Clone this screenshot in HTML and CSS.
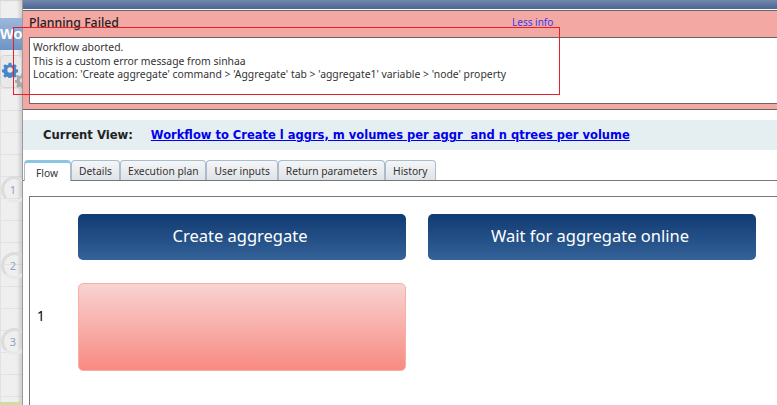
FILE: index.html
```html
<!DOCTYPE html>
<html lang="en">
<head>
    <meta charset="UTF-8">
    <title>Workflow</title>
    <link rel="stylesheet" href="styles.css">
</head>
<body>
    <div class="page">
        <aside class="rail">
            <div class="rail-title">Wo</div>
            <div class="rail-tools">
                <svg class="gear gear-blue" viewBox="0 0 24 24"><path d="M10 1h4l.6 3 2.200.9 2.600-1.700 2.800 2.800-1.700 2.600.9 2.200 3 .6v4l-3 .6-.9 2.200 1.700 2.600-2.800 2.800-2.600-1.700-2.200.9-.6 3h-4l-.6-3-2.200-.9-2.600 1.700-2.800-2.800 1.700-2.600-.9-2.200-3-.6v-4l3-.6.9-2.200-1.700-2.600 2.800-2.800 2.600 1.700 2.200-.9zM12 8a4 4 0 1 0 0 8 4 4 0 0 0 0-8z" fill-rule="evenodd"/></svg>
                <svg class="gear gear-grey" viewBox="0 0 24 24"><path d="M10 1h4l.6 3 2.200.9 2.600-1.700 2.800 2.800-1.700 2.600.9 2.200 3 .6v4l-3 .6-.9 2.200 1.700 2.600-2.800 2.800-2.600-1.700-2.200.9-.6 3h-4l-.6-3-2.200-.9-2.600 1.700-2.800-2.800 1.700-2.600-.9-2.200-3-.6v-4l3-.6.9-2.200-1.700-2.600 2.800-2.800 2.600 1.700 2.200-.9zM12 8a4 4 0 1 0 0 8 4 4 0 0 0 0-8z" fill-rule="evenodd"/></svg>
            </div>
            <div class="steps">
                <div class="step"><span>1</span></div>
                <div class="step"><span>2</span></div>
                <div class="step"><span>3</span></div>
            </div>
            <div class="rail-foot"></div>
        </aside>

        <main class="dialog">
            <div class="dialog-top"></div>

            <section class="error">
                <div class="error-head">
                    <h2>Planning Failed</h2>
                    <a class="less" href="#">Less info</a>
                </div>
                <div class="error-body">
                    <p>Workflow aborted.</p>
                    <p>This is a custom error message from sinhaa</p>
                    <p>Location: 'Create aggregate' command &gt; 'Aggregate' tab &gt; 'aggregate1' variable &gt; 'node' property</p>
                </div>
            </section>

            <div class="current">
                <strong>Current View:</strong>
                <a href="#">Workflow to Create l aggrs, m volumes per aggr&nbsp; and n qtrees per volume</a>
            </div>

            <ul class="tabs">
                <li class="tab active">Flow</li>
                <li class="tab">Details</li>
                <li class="tab">Execution plan</li>
                <li class="tab">User inputs</li>
                <li class="tab">Return parameters</li>
                <li class="tab">History</li>
            </ul>

            <div class="panel">
                <div class="flow">
                    <div></div>
                    <div class="cmd">Create aggregate</div>
                    <div class="cmd cmd-next">Wait for aggregate online</div>
                    <div class="row-num">1</div>
                    <div class="cell-failed"></div>
                </div>
            </div>
        </main>
    </div>

    <div class="highlight"></div>
</body>
</html>
```

FILE: styles.css
```css
html, body {
    margin: 0;
    padding: 0;
    height: 405px;
    overflow: hidden;
    background: #fff;
    font-family: "Noto Sans", "Open Sans", sans-serif;
}
.page {
    display: flex;
    height: 405px;
}

/* left rail behind the dialog */
.rail {
    position: relative;
    width: 23px;
    flex-shrink: 0;
    overflow: hidden;
    background-color: #efefef;
    background-image:
        linear-gradient(#e2e2e2 1px, transparent 1px),
        linear-gradient(90deg, #e2e2e2 1px, transparent 1px);
    background-size: 22px 22px;
    border-right: 1px solid #9a9a9a;
    box-sizing: border-box;
    box-shadow: inset -3px 0 3px rgba(0, 0, 0, 0.12);
}
.rail-title {
    margin-top: 18px;
    height: 32px;
    background: linear-gradient(#9db8dc, #6e93c4);
    color: #fff;
    font: bold 14.5px/33px "Liberation Sans", sans-serif;
    white-space: nowrap;
}
.rail-tools {
    position: relative;
    height: 33px;
    margin-top: 5px;
    background: #e9e9e9;
    border-radius: 4px;
    border: 1px solid #d4d4d4;
    box-sizing: border-box;
}
.gear {
    position: absolute;
}
.gear-blue {
    left: 1px;
    top: 6px;
    width: 16px;
    height: 16px;
    fill: #4a86c5;
}
.gear-grey {
    left: 14px;
    top: 17px;
    width: 15px;
    height: 15px;
    fill: #a9a9a9;
}
.steps {
    display: flex;
    flex-direction: column;
    gap: 49px;
    margin-top: 88px;
    padding-left: 1px;
}
.step {
    width: 27px;
    height: 27px;
    box-sizing: border-box;
    border: 3px solid #dcdcdc;
    border-right-color: transparent;
    border-bottom-color: #e8e8e8;
    border-radius: 50%;
    padding-right: 3px;
    text-align: center;
    font: 11px/21px "Noto Sans", sans-serif;
    color: #8ea2bd;
}
.rail-foot {
    position: absolute;
    left: 0;
    right: 0;
    bottom: 0;
    height: 3px;
    background: #cfdca6;
}

/* dialog */
.dialog {
    flex: 1;
    min-width: 0;
    display: flex;
    flex-direction: column;
}
.dialog-top {
    height: 9px;
    background: linear-gradient(#7288ab, #4a6595);
}
.error {
    height: 100px;
    margin-top: 1px;
    box-sizing: border-box;
    background: #f3a8a3;
    border-top: 1px solid #666;
    border-bottom: 1px solid #666;
    padding-left: 6px;
}
.error-head {
    display: flex;
    height: 26px;
}
.error-head h2 {
    margin: 0;
    width: 483px;
    font-size: 12.3px;
    font-weight: 500;
    line-height: 23px;
    color: #222;
}
.less {
    font-size: 10px;
    line-height: 23px;
    color: #3a3af0;
    text-decoration: none;
}
.error-body {
    height: 67px;
    box-sizing: border-box;
    background: #fff;
    border: 1px solid #666;
    border-right: 0;
    padding: 3px 3px;
    font-size: 10.4px;
    line-height: 13.5px;
    color: #333;
}
.error-body p {
    margin: 0;
}
.current {
    display: flex;
    align-items: center;
    height: 30px;
    margin-top: 10px;
    padding-left: 20px;
    gap: 18px;
    background: #e5eef0;
    font-family: "DejaVu Sans", sans-serif;
    font-size: 11.6px;
    font-weight: bold;
}
.current strong {
    color: #222;
}
.current a {
    color: #0000ee;
    font-size: 11.5px;
}
.tabs {
    display: flex;
    list-style: none;
    margin: 10px 0 0;
    padding: 0 0 0 1px;
    height: 21px;
    box-sizing: border-box;
    border-bottom: 1px solid #777;
}
.tab {
    height: 20px;
    box-sizing: border-box;
    padding: 0 7px;
    background: linear-gradient(#f4f6f8, #e0e3e6);
    border: 1px solid #a9bccd;
    border-bottom: 0;
    border-radius: 4px 4px 0 0;
    font-size: 10.25px;
    line-height: 20px;
    color: #333;
}
.tab.active {
    height: 21px;
    padding: 0 12px 0 11px;
    background: #fff;
    border-top: 3px solid #8cc4e6;
    line-height: 20px;
}
.panel {
    flex: 1;
    margin: 15px 0 0 6px;
    box-sizing: border-box;
    border-top: 1px solid #777;
    border-left: 1px solid #777;
    padding-top: 17px;
}
.flow {
    display: grid;
    grid-template-columns: 48px 328px 350px;
    row-gap: 23px;
    grid-template-rows: 46px 88px;
}
.cmd {
    display: flex;
    align-items: center;
    justify-content: center;
    padding: 0 4px 3px 0;
    box-sizing: border-box;
    border-radius: 5px;
    background: linear-gradient(#103a72, #346299);
    color: #fff;
    font-size: 16.5px;
}
.cmd-next {
    margin-left: 22px;
}
.row-num {
    padding: 24px 0 0 7px;
    font-size: 13.5px;
    line-height: 18px;
    color: #000;
}
.cell-failed {
    box-sizing: border-box;
    border: 1px solid #f6b0a4;
    border-radius: 5px;
    background: linear-gradient(#f8d3d2, #f88a82);
}

/* red annotation drawn on top of the screenshot */
.highlight {
    position: absolute;
    left: 13px;
    top: 27px;
    width: 547px;
    height: 68px;
    box-sizing: border-box;
    border: 1px solid #e8202a;
}
```
